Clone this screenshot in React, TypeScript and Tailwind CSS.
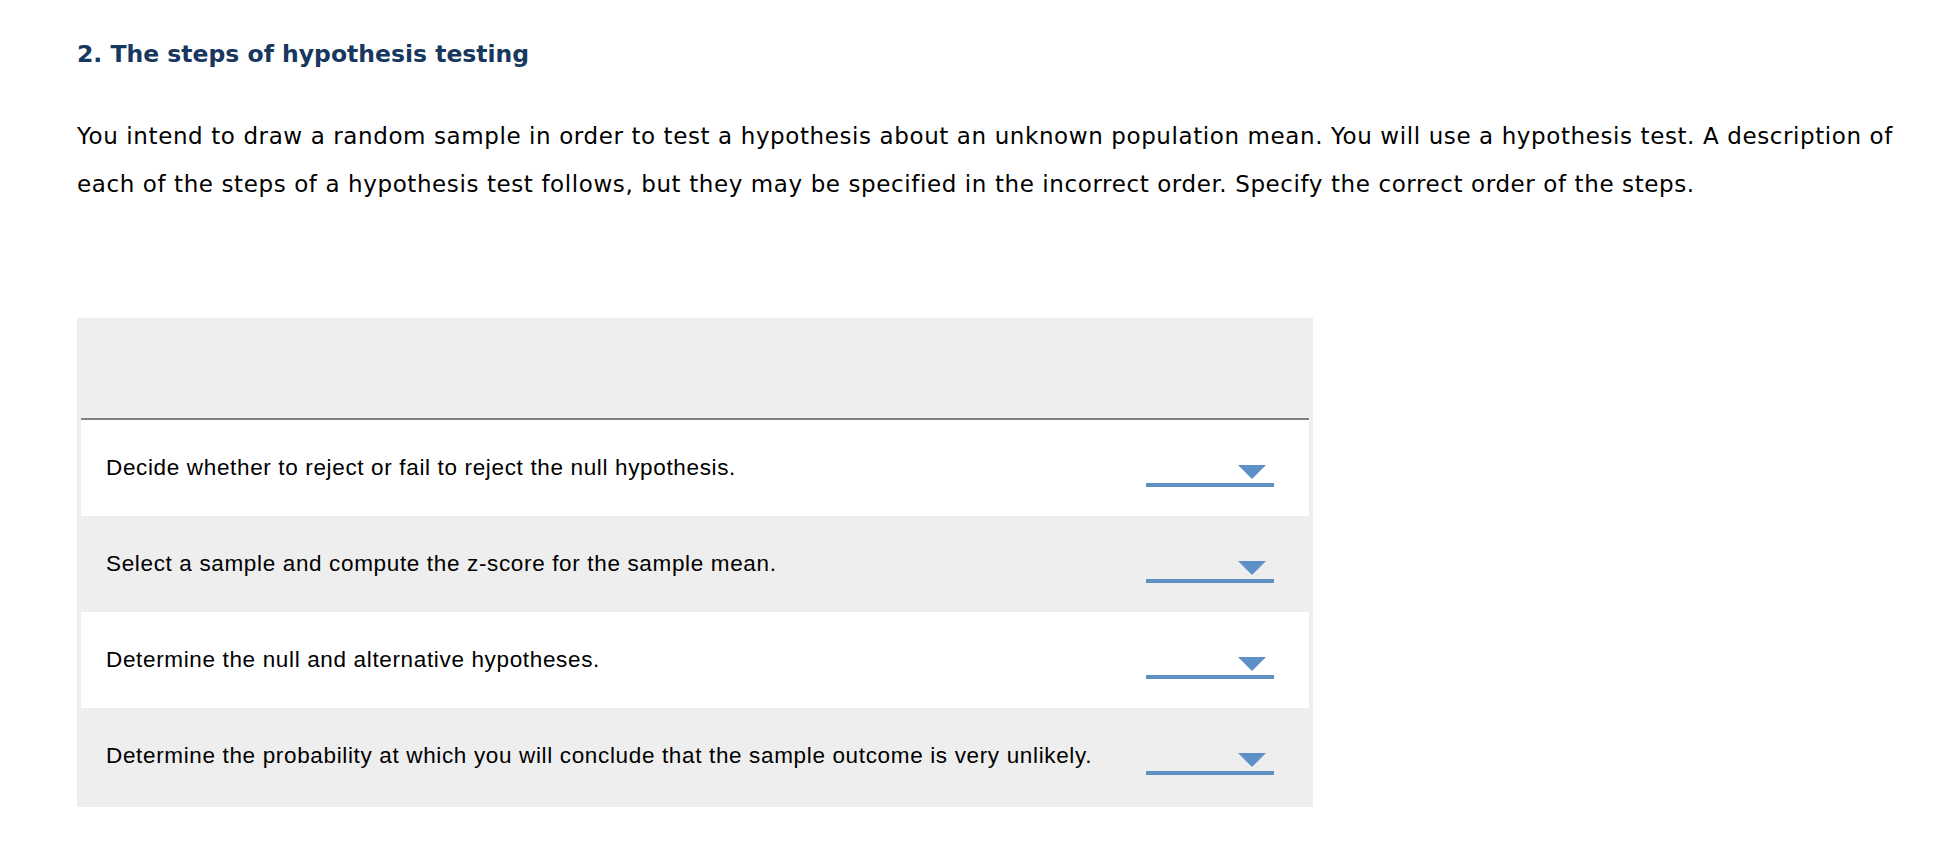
const STEPS = [
  "Decide whether to reject or fail to reject the null hypothesis.",
  "Select a sample and compute the z-score for the sample mean.",
  "Determine the null and alternative hypotheses.",
  "Determine the probability at which you will conclude that the sample outcome is very unlikely.",
];

function Dropdown() {
  return (
    <div className="relative h-[30px] w-[128px] border-b-4 border-[#5e8fc6]">
      <svg
        className="absolute right-[8px] top-[8px]"
        width="28"
        height="14"
        viewBox="0 0 28 14"
      >
        <path d="M0 0H28L14 14Z" fill="#5e8fc6" />
      </svg>
    </div>
  );
}

export default function App() {
  return (
    <div className="min-h-screen bg-white pl-[77px] pt-[39px]">
      <h2
        className="text-[23.5px] font-bold leading-[30px] text-[#17375e]"
        style={{ fontFamily: "Verdana, 'DejaVu Sans', sans-serif" }}
      >
        2. The steps of hypothesis testing
      </h2>

      <p
        className="mt-[43px] w-[1840px] text-[23px] leading-[48px] tracking-[0.6px] text-black"
        style={{ fontFamily: "Verdana, 'DejaVu Sans', sans-serif" }}
      >
        You intend to draw a random sample in order to test a hypothesis about an unknown population
        mean. You will use a hypothesis test. A description of each of the steps of a hypothesis test
        follows, but they may be specified in the incorrect order. Specify the correct order of the
        steps.
      </p>

      {/* ordering table */}
      <div className="mt-[110px] w-[1236px] bg-[#eeeeee] px-1 pb-[3px]">
        <div className="h-[100px]" />
        <div className="border-t-2 border-[#808080]">
          {STEPS.map((s, i) => (
            <div
              key={i}
              className={
                "flex h-[96px] items-center justify-between pl-[25px] pr-[35px] " +
                (i % 2 === 0 ? "bg-white" : "bg-[#eeeeee]")
              }
            >
              <span
                className="text-[22.5px] tracking-[0.65px] text-black"
                style={{ fontFamily: "Arial, 'Liberation Sans', sans-serif" }}
              >
                {s}
              </span>
              <div className="pt-[8px]">
                <Dropdown />
              </div>
            </div>
          ))}
        </div>
      </div>
    </div>
  );
}
